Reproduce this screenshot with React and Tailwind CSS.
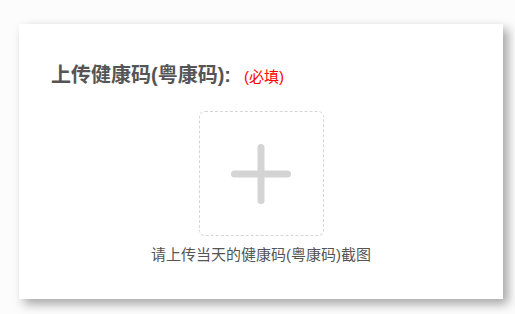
const font = { fontFamily: '"Liberation Sans", "Noto Sans CJK SC", sans-serif' };

const PlusIcon = () => (
  <svg width="62" height="62" viewBox="0 0 62 62" fill="none">
    <path d="M31 4.5v53M4.5 31h53" stroke="#d4d4d4" strokeWidth="7" strokeLinecap="round" />
  </svg>
);

export default function App() {
  return (
    <div className="w-[515px] h-[314px] bg-[#fcfcfc] pt-[24px] pl-[19px]" style={font}>
      <div className="w-[484px] h-[275px] bg-white shadow-[5px_5px_10px_rgba(0,0,0,0.35)] pt-[37px] px-[32px]">
        {/* title row */}
        <div className="flex items-baseline">
          <span className="text-[20px] leading-[28px] font-bold text-[#555]">上传健康码(粤康码):</span>
          <span className="ml-[13px] text-[15px] text-[#ff0000]">(必填)</span>
        </div>

        {/* upload area */}
        <div className="flex flex-col items-center mt-[22px]">
          <button className="w-[125px] h-[125px] border border-dashed border-[#d6d6d6] rounded-[6px] flex items-center justify-center bg-white">
            <PlusIcon />
          </button>
          <p className="mt-[8px] text-[15px] leading-[22px] text-[#555]">请上传当天的健康码(粤康码)截图</p>
        </div>
      </div>
    </div>
  );
}
